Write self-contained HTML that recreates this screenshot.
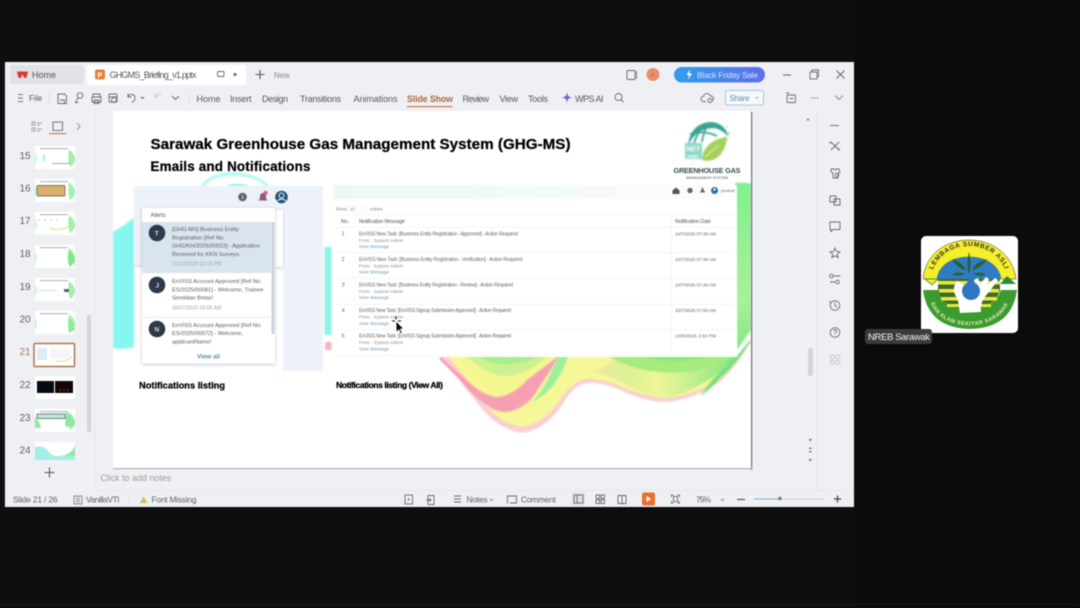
<!DOCTYPE html>
<html lang="en"><head><meta charset="utf-8"><title>GHG-MS Briefing</title>
<style>
html,body{margin:0;padding:0;background:#0e0e10;width:1080px;height:608px;overflow:hidden}
svg{display:block;font-family:"Liberation Sans",sans-serif}
#root{filter:blur(.4px)}
.t{font-size:9px;fill:#55585e}
.s{font-size:8.4px;fill:#5f6166}
.n{font-size:10px;fill:#5f6166}
.i{fill:none;stroke:#666a70;stroke-width:.9}
.m{font-size:5.6px;fill:#6a6a6a}
.l{font-size:4.2px;fill:#808080}
.b{font-size:4.2px;fill:#5c8db0}
.k{font-weight:bold;fill:#000;stroke:#000;stroke-width:.25}
</style></head><body>
<svg id="root" width="1080" height="608" viewBox="0 0 1080 608" xmlns="http://www.w3.org/2000/svg">
<defs>
<linearGradient id="ai" x1="0" x2="1"><stop offset="0" stop-color="#2f9df0"/><stop offset="1" stop-color="#5f6fe8"/></linearGradient>
<linearGradient id="hd" x1="0" x2="1"><stop offset="0" stop-color="#edf8f5"/><stop offset="1" stop-color="#fbfdfc"/></linearGradient>
<linearGradient id="rg" x1="0" x2="0" y1="0" y2="1"><stop offset="0" stop-color="#7ff08f"/><stop offset=".7" stop-color="#a8f09a"/><stop offset="1" stop-color="#86e67f"/></linearGradient>
<linearGradient id="gb" x1="0" x2="1"><stop offset="0" stop-color="#f7e9a0"/><stop offset=".45" stop-color="#a5e88a" stop-opacity=".1"/><stop offset="1" stop-color="#79e47f"/></linearGradient>
<filter id="b1" x="-10%" y="-10%" width="120%" height="120%"><feGaussianBlur stdDeviation=".8"/></filter>
<filter id="b2" x="-30%" y="-30%" width="160%" height="160%"><feGaussianBlur stdDeviation="1.6"/></filter>
<filter id="sh" x="-10%" y="-10%" width="120%" height="120%"><feDropShadow dx="0" dy="1" stdDeviation="1.800" flood-color="#000" flood-opacity=".22"/></filter>
<g id="th"><rect width="40" height="23" fill="#fff"/><rect x="5" y="2" width="28" height="1.200" fill="#b5bcbc"/><path d="M34 3q6 5 6 10t-5 8q-3-8-1-18z" fill="#a5eeae"/><path d="M0 7q4 5 0 11z" fill="#bdf4f0"/></g>
<path id="arcT" d="M931 281A38 35 0 0 1 1007 281"/>
<path id="arcB" d="M930 297A39 28 0 0 0 1009 297"/>
</defs>

<rect width="1080" height="608" fill="#0e0e10"/>
<rect x="855" width="225" height="608" fill="#0c0b0b"/>
<!-- window -->
<rect x="5" y="62" width="849" height="445" fill="#eff0f3"/>
<rect x="4" y="62" width="1" height="445" fill="#221c18"/>
<!-- tabs -->
<rect x="10" y="65" width="74" height="19" rx="3" fill="#e1e2e6"/>
<path d="M17 71.500h11l-1.500 6.500h-2.300l-1.700-3.500-1.700 3.500h-2.300z" fill="#d8393c"/>
<text x="32" y="78" class="t">Home</text>
<rect x="87" y="65" width="159" height="20" rx="3" fill="#fff"/>
<rect x="95" y="69.500" width="10" height="10" rx="2" fill="#e8813a"/>
<text x="97.500" y="77.500" font-size="7" font-weight="bold" fill="#fff">P</text>
<text x="109.500" y="78" class="t" textLength="87">GHGMS_Briefing_v1.pptx</text>
<rect x="217.500" y="71.500" width="6.500" height="5" rx="1" class="i"/>
<circle cx="235" cy="74.500" r="1.600" fill="#777"/>
<path d="M260 70v9M255.500 74.500h9" stroke="#555" stroke-width="1.100"/>
<text x="274" y="78" font-size="7.800" fill="#888">New</text>
<!-- right tabs -->
<rect x="627" y="70.500" width="8" height="9" rx="1" class="i"/><path d="M636.500 71v8" stroke="#777"/>
<circle cx="653" cy="74.500" r="6.500" fill="#e98f6b"/>
<text x="650.500" y="77" font-size="6" fill="#c86a45">A</text>
<rect x="674" y="67" width="91" height="15.500" rx="7.700" fill="url(#ai)"/>
<path d="M690 69.500l-3.500 5.500h2.500l-1 4.500 4-6h-2.700z" fill="#fff"/>
<text x="697" y="78" font-size="8.200" fill="#d5e6fb" textLength="61">Black Friday Sale</text>
<path d="M783 75h8" stroke="#666"/>
<rect x="810" y="72" width="7" height="7" class="i"/><path d="M812 72v-2h6.500v6.500h-1.500" class="i"/>
<path d="M836.500 70.500l8 8M844.500 70.500l-8 8" stroke="#666"/>
<!-- toolbar -->
<path d="M18 94.500h5M18 98h5M18 101.500h5" stroke="#777"/>
<text x="29" y="101" font-size="8.200" fill="#555">File</text>
<rect x="49" y="92" width=".8" height="12" fill="#dcdde0"/>
<path d="M58 94h6.500l2 2v7.500H58zM60 100h4.500v3.500" class="i"/>
<circle cx="80" cy="95.500" r="2.800" class="i"/><path d="M78 98l-2.500 4.500h3" class="i"/>
<path d="M93 97v-3h7v3M92 97h9v5h-9zM94 100h5v3.500h-5z" class="i"/>
<rect x="109" y="94" width="8" height="8" rx="1" class="i"/><circle cx="114" cy="100" r="2.500" class="i"/><path d="M109 97h8" class="i"/>
<path d="M128 97c1-3.500 6.500-3.500 7 .500 .2 2-1 4-3 5M128 93.500v3.500h3.500" class="i"/>
<path d="M141 97l1.500 1.500L144 97" class="i" stroke-width=".7"/>
<path d="M161 95c-2-1.500-5-.500-6 2M155 94v3h3" fill="none" stroke="#c5c6c9" stroke-width=".9"/>
<path d="M172 96l3.500 3.500L179 96" class="i"/>
<rect x="189" y="92" width=".8" height="12" fill="#dcdde0"/>
<text x="196.500" y="102" class="t" textLength="24">Home</text>
<text x="230" y="102" class="t" textLength="21.500">Insert</text>
<text x="262" y="102" class="t" textLength="26">Design</text>
<text x="300" y="102" class="t" textLength="41">Transitions</text>
<text x="353.500" y="102" class="t" textLength="44">Animations</text>
<text x="407" y="102" font-size="8.800" font-weight="bold" fill="#a9673f" textLength="46">Slide Show</text>
<rect x="407" y="106" width="45.500" height="1.200" fill="#c77a4c"/>
<text x="462.500" y="102" class="t" textLength="26.500">Review</text>
<text x="499.500" y="102" class="t" textLength="18.500">View</text>
<text x="528" y="102" class="t" textLength="20">Tools</text>
<path d="M567 92c.5 4 1.500 5 5.500 5.500-4 .5-5 1.500-5.500 6-.5-4.500-1.500-5.500-5.500-6 4-.5 5-1.500 5.500-5.500z" fill="#7b5fd0"/>
<text x="575" y="102" class="t" textLength="28.500">WPS AI</text>
<circle cx="618.500" cy="97" r="3.500" class="i"/><path d="M621 99.500l2.800 2.800" class="i"/>
<path d="M706 101.500h-2.500a2.500 2.500 0 0 1 0-5 3.500 3.500 0 0 1 6.800-.5 2.500 2.500 0 0 1 2 4.500" class="i"/><circle cx="710" cy="100.500" r="2" class="i"/>
<rect x="725.500" y="90.500" width="38" height="14.500" rx="1.500" fill="#f6f8fb" stroke="#8fb8d8" stroke-width=".8"/>
<text x="729.500" y="101" font-size="7.800" fill="#5d8fb8" textLength="20">Share</text>
<path d="M755.500 97l1.500 1.500 1.500-1.500" stroke="#7ba3c4" fill="none" stroke-width=".7"/>
<rect x="787" y="95" width="8.500" height="7.500" rx="1" class="i"/><path d="M786 93h3M789.500 98.500h4" class="i"/>
<path d="M811 98h1.300M814 98h1.300M817 98h1.300" stroke="#666"/>
<path d="M835 95.500l4 4 4-4" fill="none" stroke="#888" stroke-width=".9"/>
<!-- thumbnail panel -->
<rect x="95" y="110" width=".8" height="380" fill="#e6e7ea"/>
<path d="M32 122h3v3h-3zM32 128h3v3h-3zM37 123h5M37 125h3M37 129h5M37 131h3" stroke="#888" stroke-width=".7" fill="none"/>
<rect x="53" y="122" width="9.500" height="8.500" class="i"/><rect x="49" y="133" width="17" height="1.200" fill="#cf7c55"/>
<path d="M77 123l3 3.500-3 3.500" fill="none" stroke="#888" stroke-width=".9"/>
<g class="n">
<text x="19.500" y="159">15</text><text x="19.500" y="191.500">16</text><text x="19.500" y="224">17</text><text x="19.500" y="257">18</text><text x="19.500" y="290">19</text><text x="19.500" y="322.500">20</text><text x="19.500" y="355" style="fill:#b07756">21</text><text x="19.500" y="388">22</text><text x="19.500" y="421">23</text><text x="19.500" y="453.500">24</text>
</g>
<use href="#th" x="35" y="146"/><rect x="43" y="155" width="2" height="6" fill="#8fd"/><rect x="52" y="163" width="18" height="1" fill="#aaa"/>
<use href="#th" x="35" y="179"/><rect x="37" y="185.500" width="28" height="10.500" rx="1" fill="#d8b26a" stroke="#555" stroke-width=".7"/>
<use href="#th" x="35" y="212"/><path d="M50 228q8 4 20-2" stroke="#e5e08a" fill="none"/><path d="M38 220h24" stroke="#c8ccd0" stroke-dasharray="2 4"/>
<use href="#th" x="35" y="245"/><path d="M69 250q6 5 6 12l-5 5q-4-8-1-17z" fill="#7fe88c"/>
<use href="#th" x="35" y="278"/><rect x="64" y="289" width="5" height="3" fill="#567"/><rect x="38" y="290" width="18" height="1" fill="#cdd"/>
<use href="#th" x="35" y="311"/><path d="M69 318q6 6 6 12l-6 3q-2-8 0-15z" fill="#8feb9a"/>
<rect x="34" y="343.500" width="40.500" height="23" fill="#fff" stroke="#b0744c" stroke-width="1.500" rx="1"/><rect x="37" y="348" width="10" height="12" fill="#dfeaf6"/><rect x="50" y="349" width="21" height="9" fill="#f5f5f5"/><path d="M55 360q8 4 17-3" stroke="#e5e08a" fill="none"/>
<rect x="35" y="376" width="40" height="23" fill="#fff"/><rect x="37" y="381" width="17" height="12" fill="#050b12"/><rect x="55" y="381" width="18" height="12" fill="#140608"/><path d="M59 390h10" stroke="#a33" stroke-dasharray="2 2"/>
<use href="#th" x="35" y="409"/><rect x="37" y="414" width="28" height="4.500" fill="#bfe8d2" stroke="#456" stroke-width=".7"/><path d="M35 418q4 2 6 10h-6zM66 412q8 4 9 12-4 4-10 2z" fill="#8fe8a0"/>
<rect x="35" y="442" width="40" height="18" fill="#fff"/><path d="M35 447q10-2 14 5t20 2l6-7v13H35z" fill="#a5eee8"/><path d="M60 455q10 1 15-9v10z" fill="#92e89c"/>
<rect x="87" y="315" width="4" height="117" rx="2" fill="#d4d5d8"/>
<path d="M49.500 467.500v10M44.500 472.500h10" stroke="#555" stroke-width="1.100"/>
<!-- right rail -->
<rect x="816.500" y="110" width=".8" height="380" fill="#e3e4e8"/>
<g class="i">
<path d="M830 125.500h9"/>
<path d="M831 142l8 8M839 142l-8 8M829.500 143.500l2-2M838 150.500l2-2"/>
<path d="M831 169h3q1 2 2 0h3l1 3-2 1v5h-5v-5l-2-1z"/><circle cx="837" cy="175" r="1.800"/>
<path d="M830 196h6v6h-6zM834 199h6v6h-6z"/>
<path d="M830 222h10v7.500h-7l-2 2v-2h-1z"/>
<path d="M835 248l1.500 3.500 3.500.3-2.700 2.300.9 3.500-3.200-1.800-3.200 1.800.9-3.500-2.700-2.300 3.500-.3z"/>
<path d="M833.500 276h7M830 282h5"/><circle cx="831.500" cy="276" r="1.800"/><circle cx="837.500" cy="282" r="1.800"/>
<circle cx="835" cy="305.500" r="4.800"/><path d="M835 302.500v3l2 1.500M830.500 303l-1-2"/>
<circle cx="835" cy="332.500" r="4.800"/><path d="M833.500 331c.5-2 3.500-1.500 3 .500-.2.800-1.500 1-1.500 2.300M835 335.500v.5"/>
</g>
<g fill="none" stroke="#c8c9cc" stroke-width=".9"><rect x="830.500" y="355" width="3.800" height="3.800" rx="1"/><rect x="836" y="355" width="3.800" height="3.800" rx="1"/><rect x="830.500" y="360.500" width="3.800" height="3.800" rx="1"/><rect x="836" y="360.500" width="3.800" height="3.800" rx="1"/></g>
<path d="M808 118l1.800 2.500h-3.600z" fill="#888"/>
<rect x="808" y="348" width="5" height="28" rx="2" fill="#d4d5d8"/>
<path d="M808.500 439h3.600l-1.800 2.500zM808.500 449l1.800-2 1.800 2zM808.500 451h3.600l-1.800 2zM808.500 459h3.600l-1.800 2.500z" fill="#777"/>
<!-- slide -->
<rect x="751" y="112" width="1.200" height="358" fill="#707070"/>
<rect x="113" y="468" width="639" height="1.200" fill="#b0b0b0"/>
<rect x="113" y="111" width="638" height="357" fill="#fff"/>
<svg x="113" y="111" width="638" height="357" viewBox="113 111 638 357">
<!-- cyan shapes -->
<path d="M113 232q10-6 21-14v129q-10 3-21 1z" fill="#86f6f0" filter="url(#b1)"/>
<path d="M200 186q12-14 32-14 24 0 38 14h-4q-12-10-34-10-18 0-28 10z" fill="#baf8f4" filter="url(#b1)"/>
<path d="M226 186q10-4 24 0z" fill="#77efe8" filter="url(#b1)"/>
<rect x="324.500" y="247" width="7" height="88" fill="#8ff3e6" filter="url(#b1)"/>
<rect x="325" y="342" width="6.500" height="8" fill="#f7b3c3" filter="url(#b1)"/>
<!-- right green -->
<path d="M735 183q12-1 16 1v146l-14 20z" fill="url(#rg)" filter="url(#b1)"/>
<!-- wave -->
<g filter="url(#b1)">
<path d="M440 356L560 356H737L751 339V342Q737 366 722 380Q700 398 667 402Q645 402 620 390Q596 380 583 384Q572 388 564 402Q548 428 523 433Q500 430 483 410Z" fill="#fad0cf"/>
<path d="M448 356H737L750 342Q735 366 720 378Q698 394 667 398Q645 397 620 386Q596 376 581 380Q568 386 560 400Q545 422 523 427Q500 424 487 405Z" fill="#f6f798"/>
<path d="M620 356H737Q728 368 712 378Q690 392 667 398Q640 394 622 382 600 372 590 372 608 366 620 356Z" fill="url(#gb)"/>
<path d="M608 356Q640 376 690 372 712 368 735 356Z" fill="#a4ec7e"/>
<path d="M640 356Q670 366 710 356Z" fill="#8be67c"/>
<path d="M720 378Q735 366 750 342V340L737 356 712 380 700 396Q710 390 720 378Z" fill="#72e27c"/>
<path d="M457 356Q480 392 505 394 528 390 555 356Z" fill="#f4f68f"/>
<path d="M466 356Q490 378 510 376 530 372 548 356Z" fill="#cdf191"/>
<path d="M475 356Q495 366 512 364 530 362 540 356Z" fill="#a9ed8b"/>
<path d="M440 356Q455 370 470 383 485 396 497 397 514 395 527 380 540 370 553 360L558 356 552 368 533 397Q520 411 507 412 495 412 487 405 472 396 460 380 448 368 440 360Z" fill="#f79fb2"/>
<path d="M558 356H568Q565 368 557 380 549 394 530 403 542 394 552 370Z" fill="#9df09b"/>
</g>

<!-- titles -->
<text x="150.500" y="149" class="k" font-size="15.200" textLength="420">Sarawak Greenhouse Gas Management System (GHG-MS)</text>
<text x="150.500" y="171" class="k" font-size="13.400" textLength="160">Emails and Notifications</text>

<!-- logo -->
<g filter="url(#b1)" opacity=".95">
<path d="M688 146q2-22 22-24 14 0 19 15-9-9-16-9-18 1-25 18z" fill="#2d9c8e"/>
<path d="M694 143q5-14 13-20M702 142q1-10 7-19M690 134q14-4 27 2" stroke="#2d9c8e" stroke-width="1.800" fill="none"/>
<rect x="685" y="143" width="17" height="16" fill="#83d7c4"/>
<text x="686.500" y="151" font-size="6.800" font-weight="bold" fill="#fff">NET</text><text x="687.500" y="158" font-size="4.800" font-weight="bold" fill="#fff">2050</text>
<path d="M702 160c0-13 12-22 25-23-1 16-12 27-25 23z" fill="#a0cf50"/>
<path d="M705 157l14-12" stroke="#dff0aa"/>
</g>
<g fill="#d8cf95"><circle cx="727" cy="127" r=".9"/><circle cx="729" cy="133" r="1"/><circle cx="727" cy="140" r=".9"/></g>
<text x="673.500" y="173" font-size="7.300" font-weight="bold" fill="#34504f" textLength="67">GREENHOUSE GAS</text>
<text x="686" y="178.800" font-size="3.600" fill="#3a5557" textLength="42">MANAGEMENT SYSTEM</text>

<!-- left panel -->
<path d="M134 186H323V371H283V267H134Z" fill="#edf2fa"/>
<rect x="275" y="210" width="8" height="57" fill="#fff" filter="url(#sh)"/>
<rect x="134" y="265" width="8" height="2.500" fill="#e3e6ea"/>
<circle cx="242.500" cy="197" r="4.300" fill="#5d6268"/><rect x="242" y="195" width="1" height="4" fill="#ddd"/>
<path d="M263 193c2.500 0 3 2 3 4s1 2.500 1.500 3.500h-9c.5-1 1.500-1.500 1.500-3.500s.5-4 3-4z" fill="#8a5f70"/><circle cx="265.500" cy="193" r="2.200" fill="#e0607a"/>
<circle cx="281.500" cy="197" r="6.300" fill="#235679"/><circle cx="281.500" cy="195.500" r="2.500" fill="none" stroke="#e6f0f6"/><path d="M277 201q4.500-4 9 0" fill="none" stroke="#e6f0f6"/>
<rect x="142" y="208" width="133" height="155.500" fill="#fff" filter="url(#sh)"/>
<text x="150.500" y="217" font-size="6" fill="#555">Alerts</text>
<rect x="142" y="222" width="129" height="51" fill="#d9e4ef"/>
<rect x="271.500" y="222" width="3" height="112" fill="#cdd1d8"/>
<circle cx="157" cy="233" r="8.300" fill="#2d3a4a"/><text x="154.800" y="235.500" font-size="6.500" font-weight="bold" fill="#ddd">T</text>
<g font-size="5.700" fill="#5d5d5d">
<text x="172" y="231">[GHG-MS] Business Entity</text>
<text x="172" y="239.500">Registration [Ref No.</text>
<text x="172" y="247.500" textLength="88">GHG/KH/2025/00023] - Application</text>
<text x="172" y="256">Received for KKN Surveys</text>
</g>
<text x="172" y="265.500" font-size="5.200" fill="#a0a8ae">21/10/2025 02:19 PM</text>
<circle cx="157" cy="285" r="8.300" fill="#2d3a4a"/><text x="155.500" y="287.500" font-size="6.500" font-weight="bold" fill="#ddd">J</text>
<g font-size="5.700" fill="#5d5d5d">
<text x="172" y="283">EnVISS Account Approved [Ref No.</text>
<text x="172" y="291.500">ES/2025/00081] - Welcome, Trainee</text>
<text x="172" y="299.500">Sembilan Belas!</text>
</g>
<text x="172" y="309.500" font-size="5.200" fill="#a0a8ae">30/07/2025 09:08 AM</text>
<rect x="142" y="317" width="129" height=".7" fill="#dfe0e3"/>
<circle cx="157" cy="329" r="8.300" fill="#2d3a4a"/><text x="154.500" y="331.500" font-size="6.500" font-weight="bold" fill="#ddd">N</text>
<g font-size="5.700" fill="#5d5d5d">
<text x="172" y="327">EnVISS Account Approved [Ref No.</text>
<text x="172" y="335">ES/2025/00072] - Welcome,</text>
<text x="172" y="343.500">applicantName!</text>
</g>
<text x="197" y="358.500" font-size="6.300" font-weight="bold" fill="#5e8fa8">View all</text>
<text x="139" y="388.500" class="k" font-size="9.300" textLength="86">Notifications listing</text>

<!-- right panel -->
<rect x="333" y="185" width="404" height="172" fill="#fff"/>
<rect x="333" y="185" width="404" height="14" fill="url(#hd)"/>
<path d="M672.500 190.500l3.500-3 3.500 3v3.500h-7z" fill="#555"/>
<circle cx="690" cy="190.500" r="2.700" fill="#666"/>
<path d="M702.500 187l2.500 5.500h-5z" fill="#666"/>
<circle cx="714.500" cy="190.500" r="3.500" fill="#2a6db0"/><circle cx="714.500" cy="189.500" r="1.200" fill="#fff"/>
<text x="721" y="192" font-size="3.800" fill="#666">johnbrat</text>
<text x="336" y="210.500" class="l">Show</text><rect x="347" y="206" width="20" height="6" fill="#fff" stroke="#e9e9e9" stroke-width=".5"/><text x="350" y="210.500" class="l">10</text><text x="370" y="210.500" class="l">entries</text>
<g fill="#eceef0">
<rect x="336" y="214.500" width="399" height=".6"/><rect x="336" y="227" width="399" height=".6"/><rect x="336" y="252.500" width="399" height=".6"/><rect x="336" y="278" width="399" height=".6"/><rect x="336" y="304" width="399" height=".6"/><rect x="336" y="329.500" width="399" height=".6"/><rect x="336" y="355" width="399" height=".6"/><rect x="671" y="214" width=".7" height="141"/>
</g>
<g font-size="5.200" fill="#555"><text x="341" y="223">No.</text><text x="359" y="223" textLength="46">Notification Message</text><text x="675" y="223" textLength="36">Notification Date</text></g>
<g class="m">
<text x="341.500" y="235.500">1</text><text x="341.500" y="261">2</text><text x="341.500" y="286.500">3</text><text x="341.500" y="312">4</text><text x="341.500" y="337.500">5</text>
<text x="359" y="235.500" font-size="5" textLength="159">EnVISS New Task: [Business Entity Registration - Approved] - Action Required</text>
<text x="359" y="261" font-size="5" textLength="163.500">EnVISS New Task: [Business Entity Registration - Verification] - Action Required</text>
<text x="359" y="286.500" font-size="5" textLength="154">EnVISS New Task: [Business Entity Registration - Review] - Action Required</text>
<text x="359" y="312" font-size="5" textLength="152">EnVISS New Task: [EnVISS Signup Submission Approved] - Action Required</text>
<text x="359" y="337.500" font-size="5" textLength="152">EnVISS New Task: [EnVISS Signup Submission Approved] - Action Required</text>
<text x="675" y="235.500" textLength="41" font-size="4.800">10/7/2025 07:49 AM</text>
<text x="675" y="261" textLength="41" font-size="4.800">10/7/2025 07:49 AM</text>
<text x="675" y="286.500" textLength="41" font-size="4.800">10/7/2025 07:49 AM</text>
<text x="675" y="312" textLength="41" font-size="4.800">10/7/2025 07:50 AM</text>
<text x="675" y="337.500" textLength="41" font-size="4.800">10/5/2025 3:50 PM</text>
</g>
<g class="l"><text x="359" y="242" textLength="44">From : System Admin</text><text x="359" y="267.500" textLength="44">From : System Admin</text><text x="359" y="293" textLength="44">From : System Admin</text><text x="359" y="318.500" textLength="44">From : System Admin</text><text x="359" y="344" textLength="44">From : System Admin</text></g>
<g class="b"><text x="359" y="248" textLength="30">View Message</text><text x="359" y="273.500" textLength="30">View Message</text><text x="359" y="299" textLength="30">View Message</text><text x="359" y="325" textLength="30">View Message</text><text x="359" y="350.500" textLength="30">View Message</text></g>
<text x="336" y="388" class="k" font-size="8.600" textLength="107">Notifications listing (View All)</text>
</svg>
<!-- cursor -->
<path d="M396 321l.3 11 2.500-2.300 1.800 4 1.500-.7-1.800-4 3.300-.2z" fill="#0a0a0a" stroke="#fff" stroke-width=".6"/>
<path d="M396 316.500v3M392 321h3M401 321h-3" stroke="#111" stroke-width="1"/>
<!-- notes -->
<text x="100.500" y="481" font-size="8.800" fill="#9a9b9e" textLength="70.500">Click to add notes</text>
<rect x="95" y="490" width="759" height=".8" fill="#e5e6e9"/>
<!-- status -->
<text x="13" y="502.500" class="s" textLength="44.500">Slide 21 / 26</text>
<path d="M74 496h3l1 1 1-1h3v8h-3l-1-1-1 1h-3zM76 498l4 4M80 498l-4 4" fill="none" stroke="#666a70" stroke-width=".7"/>
<text x="86" y="502.500" class="s" textLength="33.500">VanillaVTI</text>
<rect x="128" y="496" width=".8" height="8" fill="#e4d9d6"/>
<path d="M143.500 496.500l3.800 6.500h-7.600z" fill="#e0b860"/>
<text x="151.500" y="502.500" class="s" textLength="45">Font Missing</text>
<rect x="405" y="495" width="7.500" height="9" class="i"/><path d="M408 498l2 1.500-2 1.500z" fill="#666"/>
<path d="M428 495.500h6v9h-6zM426 500h5M429.500 498.500l1.500 1.500-1.500 1.500" class="i"/>
<path d="M454 496h7M454 499h7M454 502h7" class="i"/>
<text x="466.500" y="502.500" class="s" textLength="21">Notes</text>
<path d="M490 499l1.500 1.500L493 499" fill="none" stroke="#666a70" stroke-width=".7"/>
<path d="M508 503h-.5v-7h9v7h-6.500" class="i"/>
<text x="521" y="502.500" class="s" textLength="35">Comment</text>
<rect x="572" y="492.500" width="13" height="13" fill="#dfe0e3"/><rect x="574" y="495" width="9" height="8" class="i"/><path d="M577 495v8" class="i"/>
<path d="M596 495h3.500v3.500H596zM601 495h3.500v3.500H601zM596 500h3.500v3.500H596zM601 500h3.500v3.500H601z" class="i"/>
<path d="M618 495.500h3.500l.5 1 .5-1h3.500v8h-3.500l-.5.500-.5-.500H618zM622 496.500v7" class="i"/>
<rect x="642" y="492.500" width="13" height="13" rx="2" fill="#e8702f"/><path d="M646.500 496l4.500 3-4.500 3z" fill="#fff"/>
<path d="M671.500 497v-2h2M677.500 495h2v2M679.500 501v2h-2M673.500 503h-2v-2" class="i"/><rect x="673.500" y="496.500" width="4" height="5" class="i"/>
<text x="696" y="502.500" class="s" textLength="15">75%</text>
<path d="M721 499l1.500 1.500L724 499" fill="none" stroke="#666a70" stroke-width=".7"/>
<path d="M737 499.500h8" stroke="#555" stroke-width="1.200"/>
<rect x="754" y="498.500" width="71" height="1" fill="#d3d4d8"/><rect x="754" y="498.500" width="26" height="1" fill="#8aa8c4"/>
<circle cx="780" cy="498.500" r="1.800" fill="#777"/>
<path d="M837.500 495.500v7M834 499h7" stroke="#444" stroke-width="1.200"/>

<!-- participant -->
<rect x="921" y="236" width="97" height="97" rx="5" fill="#fff"/>
<path d="M923 279C925 255 945 240 969 240S1013 255 1016 279H1001C999 265 986 257 969 257S939 265 937 279Z" fill="#f5ee2a" stroke="#333" stroke-width=".5"/>
<path d="M937 279C939 265 952 257 969 257S999 265 1001 279Z" fill="#2f7cc4"/>
<path d="M923 290H938Q945 309 970 310 994 309 1001 290H1017Q1012 328 970 329 928 328 923 290Z" fill="#3c9b2f"/>
<path d="M938 279H1000V291Q993 309 970 310 945 309 938 291Z" fill="#3f6b2b"/>
<g fill="#eae93a"><rect x="938" y="281" width="62" height="3.500"/><rect x="939" y="289" width="60" height="3.500"/><rect x="941" y="297" width="56" height="3.500"/><rect x="947" y="304" width="44" height="3"/></g>
<path d="M925 279h13l-6 6z" fill="#f5ee2a" stroke="#2e7d32" stroke-width=".8"/>
<path d="M1000 284l7-8 9 8z" fill="#2e8b3c"/>
<path d="M957 281c-4 4-4 12 0 17 2 5 2 11 3 15l21-1c-1-8 2-14 8-20l9-12-3-2-8 7 2-6-3-2-6 7-2-6c-5 2-8 5-11 8-3-2-7-3-10-5z" fill="#fff"/>
<circle cx="971" cy="291" r="9" fill="#2f75c0"/><path d="M966 285l5-11 5 11z" fill="#2f75c0"/>
<path d="M969 274c-2-6-2-13 0-22 2 9 2 16 0 22zM966 270c-6-1-11-5-14-11 6 2 12 6 14 11zM972 270c6-1 11-5 15-11-7 2-13 6-15 11zM965 274c-4 2-9 2-13 1 3-3 9-3 13-1zM973 274c4 2 9 2 13 1-3-3-9-3-13-1z" fill="#27612c"/>
<text font-size="6.600" font-weight="bold" fill="#333" letter-spacing=".6" text-anchor="middle"><textPath href="#arcT" startOffset="50%">LEMBAGA SUMBER ASLI</textPath></text>
<text font-size="5.400" font-weight="bold" fill="#e8e8c0" letter-spacing=".5" text-anchor="middle"><textPath href="#arcB" startOffset="50%">DAN ALAM SEKITAR SARAWAK</textPath></text>
<rect x="865" y="329" width="67" height="15" rx="3" fill="#3b3b3d"/>
<text x="868" y="340" font-size="9.500" fill="#f0f0f0" textLength="62">NREB Sarawak</text>
<rect y="604" width="1080" height="1" fill="#1c1c1e"/>
</svg>
</body></html>
